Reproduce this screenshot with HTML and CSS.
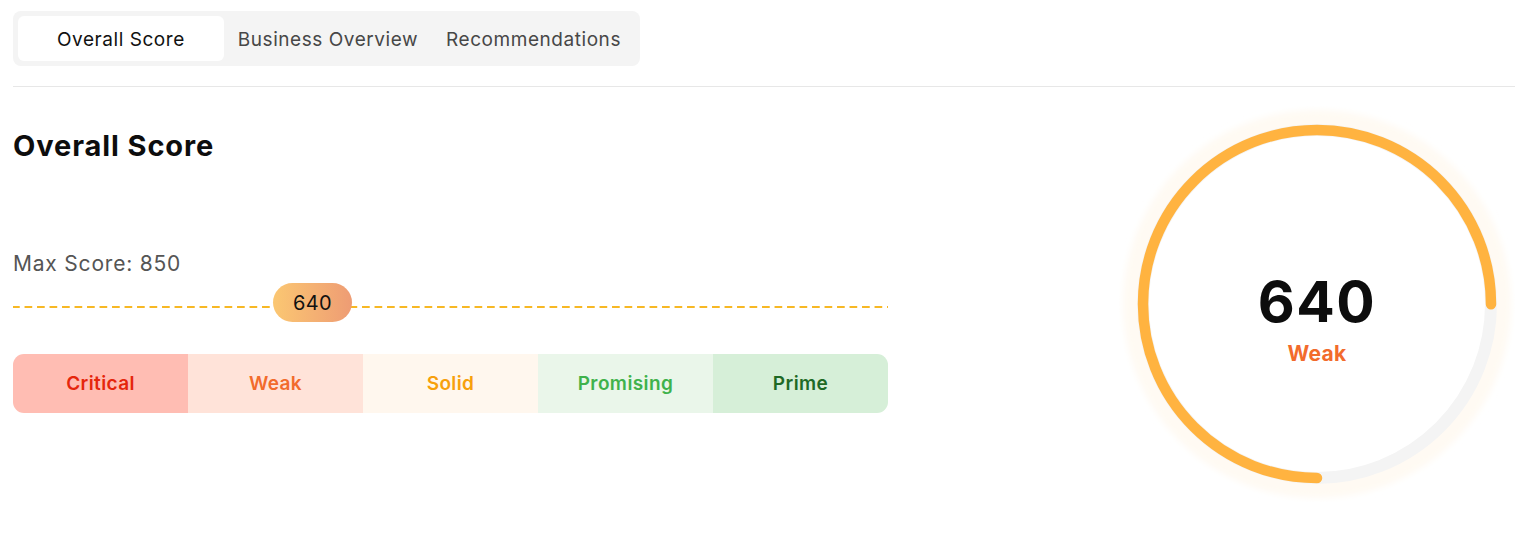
FILE: index.html
```html
<!DOCTYPE html>
<html lang="en">
<head>
<meta charset="utf-8">
<title>Overall Score</title>
<link rel="stylesheet" href="styles.css">
</head>
<body>
<div class="page">
  <nav class="tabs">
    <button class="tab tab-active">Overall Score</button>
    <button class="tab">Business Overview</button>
    <button class="tab">Recommendations</button>
  </nav>
  <div class="divider"></div>
  <section class="main">
    <div class="left">
      <h1 class="title">Overall Score</h1>
      <div class="max">Max Score: 850</div>
      <div class="track">
        <div class="dash"></div>
        <div class="pill" style="left: 260px;">640</div>
      </div>
      <div class="bands">
        <div class="band band-critical">Critical</div>
        <div class="band band-weak">Weak</div>
        <div class="band band-solid">Solid</div>
        <div class="band band-promising">Promising</div>
        <div class="band band-prime">Prime</div>
      </div>
    </div>
    <div class="gauge">
      <svg class="gauge-svg" width="396" height="396" viewBox="0 0 396 396">
        <defs>
          <filter id="soft" x="-10%" y="-10%" width="120%" height="120%">
            <feGaussianBlur stdDeviation="3"/>
          </filter>
        </defs>
        <circle cx="198" cy="198" r="194" fill="#fffaf3" filter="url(#soft)"/>
        <circle cx="198" cy="198" r="174" fill="#ffffff" stroke="#f4f4f4" stroke-width="12"/>
        <circle cx="198" cy="198" r="174" fill="none" stroke="#ffb340" stroke-width="10.5" stroke-linecap="round" stroke-dasharray="820 400" transform="rotate(90 198 198)"/>
      </svg>
      <div class="gauge-text">
        <div class="gauge-num">640</div>
        <div class="gauge-label">Weak</div>
      </div>
    </div>
  </section>
</div>
</body>
</html>
```
FILE: styles.css
```css
* { box-sizing: border-box; }
html, body { margin: 0; background: #ffffff; }
body {
  font-family: Inter, "Noto Sans", "Liberation Sans", sans-serif;
  color: #111111;
}
.page {
  padding: 11px 5px 0 13px;
}
.tabs {
  display: inline-flex;
  background: #f4f4f4;
  border-radius: 8px;
  padding: 5px;
}
.tab {
  font-family: inherit;
  font-size: 19px;
  letter-spacing: 0.55px;
  color: #474747;
  background: transparent;
  border: 0;
  height: 45px;
  padding: 1px 14px 0;
  border-radius: 6px;
  cursor: pointer;
}
.tab-active {
  background: #ffffff;
  color: #111111;
  padding: 1px 39px 0;
}
.divider {
  margin-top: 20px;
  height: 1px;
  background: #e7e7e7;
}
.main {
  display: flex;
  justify-content: space-between;
  align-items: flex-start;
}
.left {
  width: 875px;
}
.title {
  margin: 42px 0 0;
  font-size: 29px;
  line-height: 34px;
  letter-spacing: 0.9px;
  font-weight: 700;
  color: #0d0d0d;
}
.max {
  margin-top: 88px;
  font-size: 21px;
  line-height: 26px;
  letter-spacing: 0.8px;
  color: #555555;
}
.track {
  position: relative;
  margin-top: 6px;
  height: 39px;
}
.dash {
  position: absolute;
  left: 0;
  right: 0;
  top: 23px;
  height: 2px;
  background: repeating-linear-gradient(to right, #f7b824 0 7px, transparent 7px 12px);
  background-size: 12.5px 2px;
}
.pill {
  position: absolute;
  top: 0;
  width: 79px;
  height: 39px;
  border-radius: 20px;
  background: linear-gradient(to right, #fbc772, #ee9c74);
  display: flex;
  align-items: center;
  justify-content: center;
  font-size: 20px;
  letter-spacing: 0.4px;
  color: #111111;
}
.bands {
  margin-top: 32px;
  display: grid;
  grid-template-columns: repeat(5, 1fr);
  height: 59px;
  border-radius: 11px;
  overflow: hidden;
}
.band {
  display: flex;
  align-items: center;
  justify-content: center;
  font-size: 19px;
  letter-spacing: 0.4px;
  font-weight: 600;
}
.band-critical { background: #ffbdb3; color: #e5260c; }
.band-weak { background: #ffe3d9; color: #f26b2c; }
.band-solid { background: #fff7ee; color: #f7a00c; }
.band-promising { background: #eaf6ea; color: #3fb24c; }
.band-prime { background: #d6efd8; color: #1f6a25; }
.gauge {
  position: relative;
  width: 396px;
  height: 396px;
  margin-top: 19px;
}
.gauge-svg {
  display: block;
}
.gauge-text {
  position: absolute;
  inset: 0;
  display: flex;
  flex-direction: column;
  align-items: center;
  padding-top: 164px;
}
.gauge-num {
  font-size: 57px;
  line-height: 64px;
  letter-spacing: 1.5px;
  font-weight: 700;
  color: #0d0d0d;
}
.gauge-label {
  font-size: 21px;
  line-height: 26px;
  letter-spacing: 0.3px;
  font-weight: 700;
  color: #f26b2c;
  margin-top: 7px;
}
```
